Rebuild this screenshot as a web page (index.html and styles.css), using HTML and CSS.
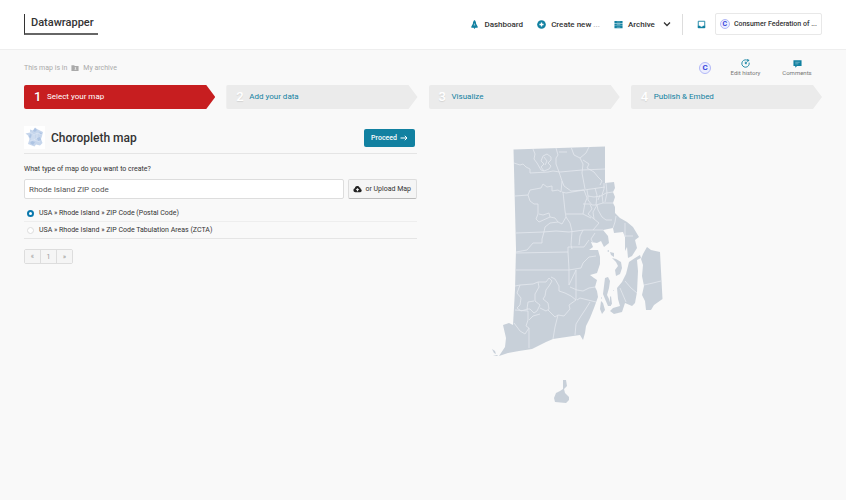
FILE: index.html
```
<!DOCTYPE html>
<html lang="en">
<head>
  <meta charset="UTF-8" />
  <meta name="viewport" content="width=device-width, initial-scale=1.0"/>
  <title>Choropleth map - Datawrapper</title>
  <link rel="stylesheet" href="styles.css">
</head>
<body>
  <header class="header">
    <a href="#" class="logo">Datawrapper</a>
    <nav class="nav">
      <a href="#" class="nav-link">
        <svg class="icon" viewBox="0 0 10 10"><path d="M5 0C3.700 1.200 3.200 2.800 3.200 4.300L1.500 7.300V8.500H4L5 10L6 8.500H8.500V7.300L6.800 4.300C6.800 2.800 6.300 1.200 5 0Z"/><path class="hole" d="M5 3.200L6 6H4Z"/></svg>
        Dashboard
      </a>
      <a href="#" class="nav-link">
        <svg class="icon" viewBox="0 0 10 10"><circle cx="5" cy="5" r="4.800"/><path class="cut" d="M5 2.700V7.300M2.700 5H7.300"/></svg>
        <span>Create new <span class="dots">...</span></span>
      </a>
      <a href="#" class="nav-link">
        <svg class="icon" viewBox="0 0 10 10"><path d="M.5 1H9.500V3.400H.5ZM.5 3.900H9.500V6.300H.5ZM.5 6.800H9.500V9.200H.5Z"/><path class="slit" d="M3 2.200H7M3 5.100H7M3 8H7"/></svg>
        Archive
        <svg class="chevron" viewBox="0 0 8 8"><path d="M1 2.500L4 5.500L7 2.500"/></svg>
      </a>
    </nav>
    <a href="#" class="inbox" aria-label="Notifications">
      <svg class="icon" viewBox="0 0 10 10"><path class="line" d="M1.400 1.400H8.600V8.600H1.400Z"/><path d="M1 6.500H3.500L4.200 7.500H5.800L6.500 6.500H9V9H1Z"/></svg>
    </a>
    <button class="team" type="button"><span class="avatar">C</span>Consumer Federation of ...</button>
  </header>

  <main class="page">
    <div class="topbar">
      <p class="crumb">
        This map is in
        <svg class="folder" viewBox="0 0 9 8"><path d="M.5 1H3.500L4.300 1.800H8.500V7.300H.5Z"/><path class="mark" d="M5 3.200a.8.8 0 1 1-.01 0M3.600 6.200Q5 4.400 6.400 6.200Z"/></svg>
        <a href="#">My archive</a>
      </p>
      <span class="avatar avatar-large">C</span>
      <button class="tool" type="button">
        <svg class="icon" viewBox="0 0 10 10"><path class="line" d="M6.500 1.200A4.100 4.100 0 1 0 9 4M5 5L7 2.700M4.800 3V5.200H6.500"/><path d="M6.400 0L9.500 1L7.500 3.200Z"/></svg>
        Edit history
      </button>
      <button class="tool" type="button">
        <svg class="icon" viewBox="0 0 10 10"><path d="M.5 1.500H9.500V7.800H4.500L2.500 9.800V7.800H.5Z"/><path class="slit" d="M2.500 3.600H7.500M2.500 5.400H6"/></svg>
        Comments
      </button>
    </div>

    <nav class="steps">
      <a href="#" class="step active"><span class="num">1</span>Select your map</a>
      <a href="#" class="step"><span class="num">2</span>Add your data</a>
      <a href="#" class="step"><span class="num">3</span>Visualize</a>
      <a href="#" class="step"><span class="num">4</span>Publish &amp; Embed</a>
    </nav>

    <div class="columns">
      <section>
        <div class="title-row">
          <svg class="thumb" viewBox="0 0 21 23">
            <rect width="21" height="23" fill="#fff"/>
            <path fill="#c6d6ec" d="M11 1.500L13 3L19 6L18 10L17 13L18.500 17L16 19.500L12 18.500L10.500 20.500L4 18L5.500 13L4 9.500L1.500 7.500L6 6.500V3.500L9 4.500Z"/>
            <path fill="#adc4e3" d="M11 2L13 4L11 6L9 5ZM6 8L8 9L7 12L5 11ZM13 12L16 11L17 14L14 15ZM8 15L11 16L9 19L6 17ZM15 6L18 7L17 9Z"/>
            <path fill="none" stroke="#e5edf8" stroke-width=".5" d="M6 6L10 9L13 7L18 9M10 9V14L5 15M10 14L16 16M13 7V12L10 14M8 9V14"/>
          </svg>
          <h1>Choropleth map</h1>
          <button class="proceed" type="button">Proceed
            <svg class="arrow" viewBox="0 0 8 8"><path d="M.5 4H7M4.800 1.800L7 4L4.800 6.200"/></svg>
          </button>
        </div>

        <form>
          <label class="question" for="map-search">What type of map do you want to create?</label>
          <div class="search-row">
            <input type="text" id="map-search" value="Rhode Island ZIP code">
            <button class="upload" type="button">
              <svg class="cloud" viewBox="0 0 10 8"><path d="M2.500 7.500A2.200 2.200 0 0 1 2 3.200A2.800 2.800 0 0 1 7.300 2.200A1.700 1.700 0 0 1 8.500 4A1.800 1.800 0 0 1 8 7.500Z"/><path class="up" d="M5 2.800L7 5H5.700V6.500H4.300V5H3Z"/></svg>
              or Upload Map
            </button>
          </div>
          <label class="option"><input type="radio" name="map" checked>USA » Rhode Island » ZIP Code (Postal Code)</label>
          <label class="option last"><input type="radio" name="map">USA » Rhode Island » ZIP Code Tabulation Areas (ZCTA)</label>
        </form>

        <div class="pager">
          <button type="button">«</button>
          <button type="button">1</button>
          <button type="button">»</button>
        </div>
      </section>

      <section class="preview">
        <svg class="map" viewBox="487 140 190 270" role="img" aria-label="Rhode Island">
          <g class="land">
            <!-- mainland -->
            <path d="M513.500 149.500L605 146.500V183L614 182L615 188L613 192L615 197L613 203L615 207V213L620 218L627 222L633 227L636 232L639 237L635 240L637 248L632 256L628 258L627 247L625 251V237L623 232L614 233L613 228L603 230L608 236L609 243L604 247L601 241L597 243L591 242L593 247L589 250L598 250L600 257V264L597 273L590 275L594 278L597 280L595 287L597 291L598 297L594 308L590 318L586 326L585 333L583 340L580 335L573 336L553 339L546 342L532 349L519 351L508 353L499 356L505 347L506 338L503 325L509 323L513 325L515 290L516 249Z"/>
            <path d="M492 349L495 351L496 354L494 353ZM493 355L498 355L497 356Z"/>
            <!-- bay islands -->
            <path d="M612 258L616 259L621 262L622 268L620 274L616 276L615 270L618 266L616 262ZM610 252L614 253V257L611 255Z"/>
            <path d="M605 278L608 277L610 281L609 288L607 295L609 299L611 306L608 306L605 299L603 294L604 286Z"/>
            <path d="M601 301L603 303L605 310L602 314L600 309ZM610 297L611 296L612 304L610 306Z"/>
            <path d="M640 255L641 258L637 260L638 271L637 292L635 303L632 306L625 303L622 312L614 314L610 311L613 308L620 306L618 299L617 288L622 282L626 274L629 262L635 258Z"/>
            <path d="M647 247L651 250L660 252L661 271L662.500 299L654 305L651 310L646 310L645 301L642 295L644 286L642 276L643 265L641 259L643 254Z"/>
            <path d="M613 291L614 290L614 291ZM601 298L602 297L602 299ZM607 251L609 250L609 252Z"/>
            <!-- Block Island -->
            <path d="M563 380L566 380L567 386L564 389L565 393L569 397L569 400L566 403L555 402L554 398L556 393L560 391L563 389Z"/>
          </g>
          <g class="borders">
            <path d="M514 163L520 165L523 164L526 167L530 169V173L548 172L553 171L560 172L582 170L605 169M533 149L535 154L534 159L537 163L541 170L544 171M541 161L543 156L547 154L551 157V160L548 163L551 166L549 169L544 171L541 167L544 164L541 161ZM544 157L547 161L545 165M556 148L558 155L556 158V164L559 172M559 152H567M571 147L574 155L580 158L586 153L589 147"/>
            <path d="M580 158L583 164L582 173L585 189M583 160L589 164L587 168L594 172L598 177L602 181L600 185M559 172L562 181L564 186L571 191L584 190L605 187M515 196L528 195L530 190L541 188L543 184L547 187L552 186V191L558 190L561 192L562 181M562 192L566 193L584 190L587 198L585 203L583 214M528 195L530 201L534 204H538V214L536 219L539 222L550 217L549 213L543 215L539 214M550 217L555 218L558 222L562 224L566 217L565 211L563 192"/>
            <path d="M516 233L543 232L556 231L569 232L584 230L603 230M544 232L545 227L550 223L558 222M566 214L583 214L591 218M566 217L570 223L572 231L571 245L572 249M516 252L527 250L533 243H542V239L544 232M516 253L568 252V247L584 247L589 240M583 230L580 236L579 245M516 270L569 270L581 268L583 263L589 257L596 256M568 252L569 269V285L576 270M595 233L591 239L593 243"/>
            <path d="M587 190L588 196L594 197L601 196L606 193L613 192M595 188L597 195L596 205L592 205L588 200V196M604 183V189L602 195L603 203L596 205M603 203L613 203M597 205L598 210L602 217L606 220H612M597 205L593 212L594 219L599 223L593 230M583 204H590L592 209L588 214L594 219M600 195L598 200M606 183L607 193L605 202M613 228L615 222L616 216M625 223V237M625 236H633"/>
            <path d="M515 286L520 285L533 284L538 282L539 287L535 294V301L540 305L537 311L534 313L530 309H527L528 302L534 301M538 282H546L549 278L552 281L549 286L546 290L545 296L543 299L548 303L549 309L546 311L540 308M551 277L555 279L559 286V291L565 293L571 296L576 300L569 305L570 309L564 316L558 315L555 317L548 310M520 285L517 293L521 298L520 305L517 308L521 311L528 309M515 310L528 311V320L526 326L529 328V348M514 323L520 331L525 334L529 328M529 320L533 316L540 314M558 315L555 327L553 339M576 270V300M577 300L580 298L596 302M570 287L577 290L583 291L589 288L595 287M590 302L585 310L581 316L576 324L575 335M625 281L631 288L637 293M620 288L626 302M644 285L653 283L661 281"/>
          </g>
        </svg>
      </section>
    </div>
  </main>
</body>
</html>
```
FILE: styles.css
```
:root {
  --teal: #1281a1;
  --red: #c71e20;
  --text: #333;
  --muted: #aaa;
  --line: #e5e5e5;
}

* {
  box-sizing: border-box;
}

body {
  margin: 0;
  background: #f9f9f9;
  color: var(--text);
  font-family: Roboto, sans-serif;
  font-size: 7px;
  line-height: 12px;
}

a {
  color: inherit;
  text-decoration: none;
}

button {
  font: inherit;
  color: inherit;
  cursor: pointer;
}

svg {
  display: block;
  flex: none;
}

.icon {
  width: 9px;
  height: 9px;
  fill: var(--teal);
}

.icon .hole {
  fill: #9cc9d7;
}

.icon .cut {
  stroke: #fff;
  stroke-width: 1.5;
}

.icon .slit {
  stroke: #9cc9d7;
  stroke-width: .7;
}

.icon .line {
  fill: none;
  stroke: var(--teal);
  stroke-width: 1;
}

/* Header */
.header {
  display: flex;
  align-items: center;
  height: 50px;
  padding: 0 24px 1px;
  background: #fff;
  border-bottom: 1px solid #eee;
}

.logo {
  padding: 0 4px 2px 6px;
  border-left: 1px solid #333;
  border-bottom: 2px solid #666;
  font-size: 11px;
  font-weight: 500;
  line-height: 17px;
}

.nav {
  display: flex;
  gap: 14px;
  margin-left: auto;
  padding-right: 11px;
  border-right: 1px solid #ddd;
  line-height: 21px;
}

.nav-link {
  display: flex;
  align-items: center;
  gap: 5px;
  font-size: 8px;
  font-weight: 500;
}

.dots {
  color: var(--muted);
}

.chevron {
  width: 8px;
  height: 8px;
  margin-left: 3px;
  fill: none;
  stroke: #333;
  stroke-width: 1.3;
}

.inbox {
  margin: 0 9px 0 14px;
}

.team {
  display: flex;
  align-items: center;
  gap: 4px;
  height: 22px;
  padding: 0 4px;
  background: #fff;
  border: 1px solid #e8e8e8;
  border-radius: 2px;
  font-weight: 500;
}

.avatar {
  width: 10px;
  height: 10px;
  border: 1px solid #b3b9f7;
  border-radius: 50%;
  background: #eceefe;
  color: #3544dd;
  font-size: 7px;
  font-weight: 700;
  line-height: 8px;
  text-align: center;
}

.avatar-large {
  width: 12px;
  height: 12px;
  margin-right: 12px;
  font-size: 8px;
  line-height: 10px;
}

/* Page */
.page {
  padding: 0 24px;
}

.topbar {
  display: flex;
  align-items: center;
  height: 35px;
}

.crumb {
  display: flex;
  align-items: center;
  gap: 4px;
  margin: 0 auto 0 0;
  color: var(--muted);
}

.folder {
  width: 8px;
  height: 8px;
  fill: #aaa;
}

.folder .mark {
  fill: #f2f2f2;
}

.tool {
  display: flex;
  flex-direction: column;
  align-items: center;
  width: 45px;
  padding: 0;
  background: none;
  border: 0;
  color: #777;
  font-size: 6px;
  line-height: 9px;
}

.tool + .tool {
  width: 50px;
  margin: 0 0 0 4px;
}

.steps {
  display: grid;
  grid-template-columns: repeat(4, 1fr);
  gap: 11px;
}

.step {
  display: flex;
  align-items: center;
  gap: 6px;
  height: 24px;
  padding-left: 10px;
  background: #ebebeb;
  border-radius: 2px;
  clip-path: polygon(0 0, calc(100% - 9px) 0, 100% 50%, calc(100% - 9px) 100%, 0 100%);
  color: var(--teal);
  font-size: 8px;
}

.num {
  width: 7px;
  color: #fff;
  font-size: 13px;
  font-weight: 500;
  text-shadow: 0 1px 1px rgba(0, 0, 0, 0.1);
}

.step.active {
  background: var(--red);
  color: #fff;
}

.columns {
  display: grid;
  grid-template-columns: 1fr 1fr;
  gap: 12px;
  padding-top: 15px;
}

.title-row {
  display: flex;
  align-items: center;
  height: 30px;
  padding: 0 2px 2px 0;
  border-bottom: 1px solid var(--line);
}

.thumb {
  width: 21px;
  height: 23px;
}

h1 {
  margin: 0 auto 0 6px;
  font-size: 12px;
  font-weight: 500;
}

.proceed {
  display: flex;
  align-items: center;
  gap: 3px;
  height: 18px;
  padding: 0 7px;
  background: var(--teal);
  border: 0;
  border-radius: 2px;
  color: #fff;
  font-weight: 500;
}

.arrow {
  width: 8px;
  height: 8px;
  fill: none;
  stroke: #fff;
}

.question {
  display: block;
  margin: 9px 0 4px;
}

.search-row {
  display: flex;
  gap: 4px;
  margin-bottom: 6px;
}

.search-row input {
  flex: 1;
  min-width: 0;
  height: 20px;
  padding: 0 4px;
  border: 1px solid #ddd;
  border-radius: 2px;
  background: #fff;
  color: #555;
  font: 8px Roboto, sans-serif;
}

.upload {
  display: flex;
  align-items: center;
  gap: 3px;
  height: 20px;
  padding: 0 5px 0 4px;
  background: #f5f5f5;
  border: 1px solid #ddd;
  border-bottom-color: #bbb;
  border-radius: 2px;
}

.cloud {
  width: 9px;
  height: 8px;
  fill: #222;
}

.cloud .up {
  fill: #f5f5f5;
}

.option {
  display: flex;
  align-items: center;
  gap: 5px;
  height: 17px;
  padding-left: 3px;
  border-bottom: 1px solid #eee;
}

.option.last {
  border-color: var(--line);
}

.option input {
  appearance: none;
  width: 7px;
  height: 7px;
  margin: 0;
  border: 1px solid #ddd;
  border-radius: 50%;
  background: #fff;
}

.option input:checked {
  border: 2px solid #0a78ad;
}

.pager {
  display: inline-flex;
  margin-top: 10px;
  border: 1px solid #ddd;
  border-radius: 2px;
}

.pager button {
  width: 15px;
  height: 13px;
  padding: 0;
  background: #f5f5f5;
  border: 0;
  color: #999;
}

.pager button + button {
  width: 16px;
  border-left: 1px solid #ddd;
}

/* Map preview */
.preview {
  padding-top: 16px;
}

.map {
  width: 190px;
  max-width: 100%;
  margin-left: 58px;
}

.land {
  fill: #c8d0d9;
}

.borders {
  fill: none;
  stroke: #e4e9ef;
  stroke-width: .8;
  stroke-linejoin: round;
}
```
